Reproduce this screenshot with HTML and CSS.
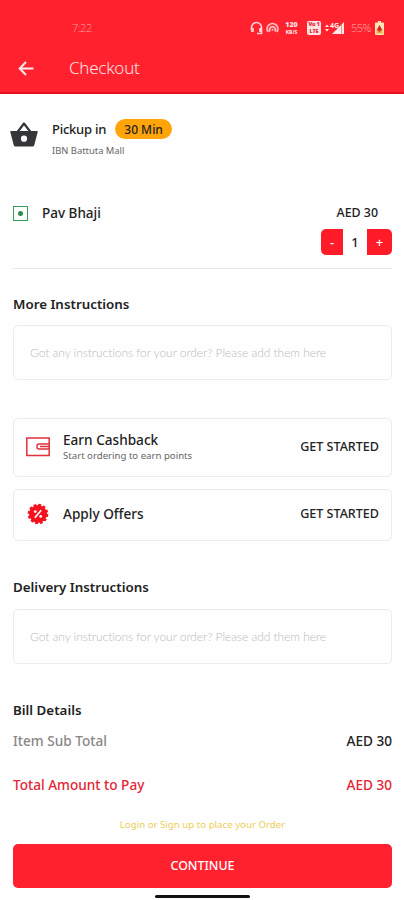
FILE: index.html
```html
<!DOCTYPE html>
<html lang="en">
<head>
<meta charset="utf-8">
<title>Checkout</title>
<link rel="stylesheet" href="styles.css">
</head>
<body>
<header class="header">
  <div class="status">
    <span class="time">7:22</span>
    <div class="status-icons">
      <svg width="13" height="14" viewBox="0 0 13 14" fill="none" stroke="#ffd5d8" stroke-width="1.600"><path d="M1.500 9V6.500a5 5 0 0 1 10 0v6H7"/><path d="M2.500 7v4M10.500 7v4" stroke-width="2.600"/></svg>
      <svg width="13" height="14" viewBox="0 0 13 14" fill="none" stroke="#ffc4c8" stroke-width="1.700"><path d="M2 11a5.400 5.400 0 1 1 9 0M4.200 10.500a2.900 2.900 0 1 1 4.600 0"/><circle cx="6.500" cy="8.800" r="1" fill="#ffc4c8" stroke="none"/></svg>
      <span class="speed"><b>120</b><i>KB/S</i></span>
      <span class="volte"><b>Vo 1</b><b>LTE</b></span>
      <svg class="signal" width="20" height="14" viewBox="0 0 20 14"><path d="M0 6l2-2.500L4 6zM0 8h4l-2 2.500zM19 1v12H7z" fill="#ffe9ea"/><path d="M16.500 3v10" stroke="#ff6d75" stroke-width=".8"/><text x="5" y="6.500" class="net">4G</text></svg>
      <span class="percent">55%</span>
      <svg width="9" height="14" viewBox="0 0 9 14"><path d="M3 0h3v1.500h2a1 1 0 0 1 1 1V13a1 1 0 0 1-1 1H1a1 1 0 0 1-1-1V2.500a1 1 0 0 1 1-1h2z" fill="#ffe5b4"/><path d="M1.500 8h6v4.500h-6z" fill="#f3ac3c"/><path d="M4.500 4L7 8.500 4.500 11 2 8.500z" fill="#d8232b"/></svg>
    </div>
  </div>
  <div class="appbar">
    <svg width="16" height="15" viewBox="0 0 16 15" fill="none" stroke="#ffe9ea" stroke-width="2"><path d="M15.500 7.500H2M8 1L1.700 7.500 8 14"/></svg>
    <h1 class="title">Checkout</h1>
  </div>
</header>
<main class="content">
  <section class="pickup">
    <svg width="28" height="26" viewBox="0 0 28 26"><path d="M7.500 10L14 1.500 20.500 10" fill="none" stroke="#35363a" stroke-width="2.200" stroke-linejoin="round"/><path fill-rule="evenodd" d="M1 9h26a.8.8 0 0 1 .7 1.100L24.300 23a2 2 0 0 1-2 1.500H5.700a2 2 0 0 1-2-1.500L.3 10.100A.8.800 0 0 1 1 9zm13 4.600a3.100 3.100 0 1 0 0 6.200 3.100 3.100 0 0 0 0-6.200z" fill="#35363a"/></svg>
    <div>
      <div class="pickup-line"><span class="pickup-label">Pickup in</span><span class="badge">30 Min</span></div>
      <div class="place">IBN Battuta Mall</div>
    </div>
  </section>
  <section class="item">
    <span class="veg"></span>
    <span class="item-name">Pav Bhaji</span>
    <span class="price">AED 30</span>
  </section>
  <div class="stepper"><button class="minus">-</button><span class="qty">1</span><button class="plus">+</button></div>
  <h2 class="heading more">More Instructions</h2>
  <div class="note">Got any instructions for your order? Please add them here</div>
  <section class="card cashback">
    <svg width="24" height="20" viewBox="0 0 24 20" fill="none" stroke="#e0303c" stroke-width="1.500"><path d="M23.200 1H.8v17.500h22.400z"/><path d="M23 7H13a2 2 0 0 0-2 2v1a2 2 0 0 0 2 2h10M14 9.500h9" stroke-width="1.400"/></svg>
    <div class="card-text"><div class="card-title">Earn Cashback</div><div class="card-sub">Start ordering to earn points</div></div>
    <span class="action">GET STARTED</span>
  </section>
  <section class="card offers">
    <svg width="24" height="22" viewBox="-12 -11 24 22"><circle r="9" fill="#f4101c"/><circle r="9.300" fill="none" stroke="#f4101c" stroke-width="2" stroke-dasharray="2.800 2.070"/><path d="M-3.200 3.700L3.200-3.700" stroke="#fff" stroke-width="1.700"/><circle cx="-2.700" cy="-2.400" r="1.400" fill="#fff"/><circle cx="2.700" cy="2.400" r="1.400" fill="#fff"/></svg>
    <div class="card-text"><div class="card-title">Apply Offers</div></div>
    <span class="action">GET STARTED</span>
  </section>
  <h2 class="heading delivery">Delivery Instructions</h2>
  <div class="note">Got any instructions for your order? Please add them here</div>
  <h2 class="heading bill">Bill Details</h2>
  <div class="row subtotal"><span class="sub-label">Item Sub Total</span><span>AED 30</span></div>
  <div class="row total"><span class="total-label">Total Amount to Pay</span><span>AED 30</span></div>
  <div class="login">Login or Sign up to place your Order</div>
  <button class="continue">CONTINUE</button>
  <div class="homebar"></div>
</main>
</body>
</html>
```

FILE: styles.css
```css
* { box-sizing: border-box; }
body { margin: 0; width: 404px; height: 900px; overflow: hidden; background: #fefefe; color: #222; font: 500 13px/20px "Noto Sans", "Open Sans", sans-serif; }
svg { display: block; flex: none; }
button { border: 0; padding: 0; color: #fff; font: inherit; }
.header { height: 94px; background: #ff222e; border-bottom: 2px solid #e5101c; padding-top: 18px; }
.status { height: 20px; display: flex; justify-content: space-between; padding: 0 20px 0 72px; }
.time { font: 300 11px/20px "Open Sans", sans-serif; color: #ffa0a5; letter-spacing: -.4px; }
.status-icons { display: flex; align-items: center; }
.status-icons svg + svg { margin-left: 3px; }
.speed { width: 15px; margin-left: 5px; display: flex; flex-direction: column; align-items: center; font: 700 7px/8px "Noto Sans", sans-serif; color: #ffe0e2; }
.speed i { font: 800 5px/6px "Noto Sans", sans-serif; }
.volte { width: 14px; height: 14px; margin-left: 8px; border-radius: 2px; background: #ffe4e5; color: #e52a35; display: flex; flex-direction: column; align-items: center; font: 700 5.500px/7px "Noto Sans", sans-serif; }
.volte b { white-space: nowrap; letter-spacing: -.2px; }
.signal { margin-left: 4px; }
.net { font: 700 7px "Noto Sans", sans-serif; fill: #ffe9ea; }
.percent { width: 21px; margin: 0 3px 0 6px; font: 300 11px/20px "Open Sans", sans-serif; color: #ffadb1; letter-spacing: -.5px; }
.appbar { height: 40px; margin-top: 10px; display: flex; align-items: center; padding-left: 18px; gap: 35px; }
.title { margin: 0; font: 300 17px/24px "Noto Sans", sans-serif; letter-spacing: -.25px; color: #ffe1e3; }
.content { padding: 0 12px 0 13px; }
.pickup { display: flex; padding-top: 25px; margin-left: -3px; gap: 14px; }
.pickup svg { margin-top: 3px; }
.pickup-line { display: flex; height: 20px; align-items: center; gap: 9px; }
.pickup-label { letter-spacing: -.25px; margin-top: -1px; }
.badge { width: 57px; height: 20px; border-radius: 10px; background: #ffa50a; text-align: center; line-height: 21px; font-size: 12px; }
.place { font: 400 9.400px/20px "Noto Sans", sans-serif; color: #666; margin-top: 2px; }
.item { display: flex; align-items: center; height: 20px; margin-top: 42px; padding-right: 14px; }
.item-name { font-size: 13.500px; }
.veg { width: 15px; height: 15px; border: 1.500px solid #3a9d57; display: grid; place-items: center; margin-right: 14px; }
.veg::after { content: ""; width: 5px; height: 5px; border-radius: 50%; background: #2b8d49; }
.price { margin-left: auto; font-size: 12.400px; }
.stepper { height: 40px; margin-top: 6px; padding-bottom: 13px; border-bottom: 1px solid #e9e9e9; display: flex; justify-content: flex-end; text-align: center; line-height: 26px; }
.minus { width: 22px; background: #ff1b28; border-radius: 5px 0 0 5px; }
.plus { width: 25px; background: #ff1b28; border-radius: 0 5px 5px 0; }
.qty { width: 24px; }
.heading { margin: 0; font: 600 13.350px/20px "Noto Sans", sans-serif; color: #222; }
.more { margin-top: 25px; }
.note { height: 55px; margin-top: 11px; border: 1px solid #ececec; border-radius: 5px; padding-left: 16px; font: 300 12px/53px Lato, sans-serif; letter-spacing: -.05px; color: #bbb; }
.card { border: 1px solid #ececec; border-radius: 5px; display: flex; align-items: center; padding: 0 12px; }
.cashback { height: 59px; margin-top: 38px; padding-bottom: 2px; }
.offers { height: 52px; margin-top: 12px; padding-bottom: 2px; }
.card-text { margin-left: 13px; }
.card-title { line-height: 18px; font-size: 13.600px; }
.card-sub { font: 400 9.650px/14px "Noto Sans", sans-serif; color: #666; }
.action { margin-left: auto; font-size: 12.550px; }
.delivery { margin-top: 36px; }
.delivery + .note { margin-top: 12px; }
.bill { margin-top: 36px; }
.row { display: flex; justify-content: space-between; font-size: 13.600px; }
.subtotal { margin-top: 11px; }
.sub-label { color: #888; }
.total { margin-top: 24px; color: #e32636; }
.login { margin-top: 20px; text-align: center; font: 400 9.700px/20px "Noto Sans", sans-serif; color: #edcf55; }
.continue { display: block; width: 100%; height: 44px; margin-top: 9px; border-radius: 5px; background: #ff222e; font-size: 12.400px; }
.homebar { width: 95px; height: 3px; margin: 7px auto 0; border-radius: 2px; background: #111; }
```
